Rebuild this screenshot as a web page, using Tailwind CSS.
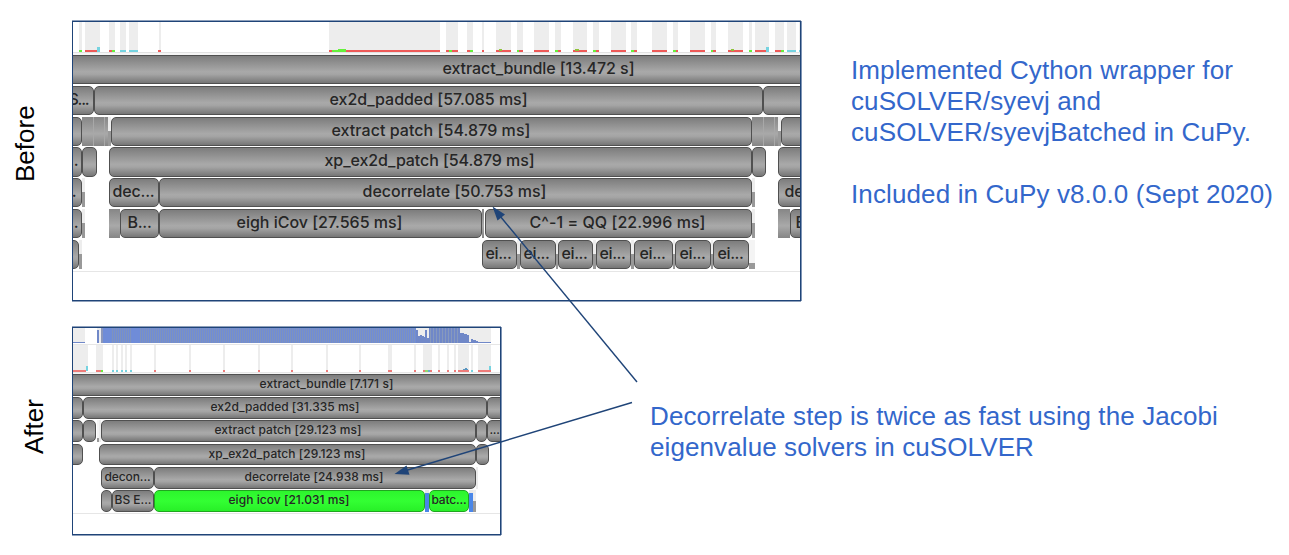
<!DOCTYPE html>
<html lang="en">
<head>
<meta charset="utf-8">
<title>CuPy eigenvalue solver timings</title>
<script src="https://cdn.jsdelivr.net/npm/@tailwindcss/browser@4"></script>
</head>
<body class="bg-white">
<main class="relative w-[1289px] h-[555px] overflow-hidden flex flex-col pt-[21px]">
  <section class="flex items-start h-[306px]">
    <h2 class="w-[72px] h-[280px] shrink-0 pt-[81px] pl-[10px]"><span class="block [writing-mode:vertical-rl] rotate-180 h-[80px] w-[30px] text-[26px] leading-[30px] text-black font-['Liberation_Sans',sans-serif]">Before</span></h2>
    <div class="w-[729px] h-[280px] shrink-0 border border-[#1f4478] shadow-[1px_0_0_#7f95b5,0_-1px_0_#8ea0bb,0_1px_0_#8ea0bb] overflow-hidden bg-white">
      <svg id="strip-a" class="block w-[727px] h-[33px]" viewBox="73 22 727 33" shape-rendering="crispEdges"></svg>
      <div id="rows-a" class="flex flex-col gap-[1.6px] border-b border-[#e6e6e6] h-[217px]"></div>
    </div>
    <div class="pl-[50px] pt-[34px] text-[26px] leading-[31px] text-[#3367cb] font-['Liberation_Sans',sans-serif] whitespace-nowrap">
      <p><span data-fit="381">Implemented Cython wrapper for</span><br><span data-fit="249">cuSOLVER/syevj and</span><br><span data-fit="399">cuSOLVER/syevjBatched in CuPy.</span></p>
      <p class="mt-[31px]"><span data-fit="421">Included in CuPy v8.0.0 (Sept 2020)</span></p>
    </div>
  </section>
  <section class="flex items-start h-[208px]">
    <h2 class="w-[72px] h-[208px] shrink-0 pt-[67px] pl-[19px]"><span class="block [writing-mode:vertical-rl] rotate-180 h-[60px] w-[30px] text-[26px] leading-[30px] text-black font-['Liberation_Sans',sans-serif]">After</span></h2>
    <div class="w-[429px] h-[208px] shrink-0 border border-[#1f4478] shadow-[1px_0_0_#7f95b5,0_-1px_0_#8ea0bb,0_1px_0_#8ea0bb] overflow-hidden bg-white">
      <svg id="strip-b" class="block w-[427px] h-[46px]" viewBox="73 328 427 46" shape-rendering="crispEdges"></svg>
      <div id="rows-b" class="flex flex-col gap-[1.3px] border-b border-[#e6e6e6] h-[140px]"></div>
    </div>
    <div class="pl-[149px] pt-[74px] text-[26px] leading-[31px] text-[#3367cb] font-['Liberation_Sans',sans-serif] whitespace-nowrap">
      <p><span data-fit="567">Decorrelate step is twice as fast using the Jacobi</span><br><span data-fit="383">eigenvalue solvers in cuSOLVER</span></p>
    </div>
  </section>
  <svg class="absolute inset-0 w-[1289px] h-[555px]" viewBox="0 0 1289 555" fill="#1f4478" stroke="#1f4478" stroke-width="1.4">
    <path d="M637 382L500 216"/><path stroke="none" d="M492.500 206.500L505 214.500L497.500 220.500Z"/>
    <path d="M632 402.500L406 470.500"/><path stroke="none" d="M394.500 474L406.500 465.500L409.500 474.800Z"/>
  </svg>
</main>
<script>
const skin = {
  bar: 'border border-[#505050] bg-[linear-gradient(#7d7d7d,#a9a9a9_58%,#a4a4a4_68%,#767676)]',
  green: 'border border-[#20a520] bg-[linear-gradient(#2df52d,#33ff33_50%,#28f028)]',
  fill: 'bg-[linear-gradient(#868686,#a9a9a9_58%,#858585)]',
  half: 'bg-[linear-gradient(#ededed_48%,#999999_48%)]',
  low: 'bg-[linear-gradient(#f4f4f4_80%,#999999_80%)]',
  line: 'bg-[#a8a8a8]',
  blue: 'bg-[linear-gradient(#e8e8e8_12%,#4a86e8_12%)]',
  pale: 'bg-[#ececec]'
};
// Each item: start, end, kind, label, label start, label width
const before = [
  [[65,808,'bar','extract_bundle [13.472 s]',443,191]],
  [[60,94,'bar','S...',69,19],[94,763,'bar','ex2d_padded [57.085 ms]',330,197],[763,810,'bar']],
  [[60,82,'bar'],[82,93,'fill'],[93,94,'line'],[94,104,'fill'],[104,105,'line'],[105,108,'fill'],[108,111,'half'],[111,752,'bar','extract patch [54.879 ms]',332,198],[752,763,'fill'],[763,764,'line'],[764,774,'fill'],[774,775,'line'],[775,778,'fill'],[778,781,'half'],[781,810,'bar']],
  [[60,82,'bar','...',65,13],[82,97,'bar'],[109,752,'bar','xp_ex2d_patch [54.879 ms]',325,209],[752,766,'bar'],[778,815,'bar']],
  [[60,82,'bar','...',63,13],[82,85,'half'],[109,159,'bar','dec...',113,41],[159,752,'bar','decorrelate [50.753 ms]',363,183],[752,755,'half'],[778,829,'bar','dec...',785,41]],
  [[60,82,'bar','...',65,13],[82,85,'half'],[109,120,'fill'],[120,159,'bar','B...',128,23],[159,482,'bar','eigh iCov [27.565 ms]',237,165],[482,484,'fill'],[485,752,'bar','C^-1 = QQ [22.996 ms]',530,175],[752,755,'half'],[778,790,'fill'],[790,830,'bar','B...',796,23]],
  [[60,79,'bar'],[79,82,'half'],[482,517,'bar','ei...',486,25],[517,520,'half'],[520,556,'bar','ei...',524,25],[556,558,'half'],[558,593,'bar','ei...',562,25],[593,596,'half'],[596,631,'bar','ei...',600,25],[631,634,'half'],[634,673,'bar','ei...',640,25],[673,675,'half'],[675,711,'bar','ei...',680,25],[711,713,'half'],[713,749,'bar','ei...',718,25],[749,755,'low']]
];
const after = [
  [[65,508,'bar','extract_bundle [7.171 s]',260,133]],
  [[60,83,'bar'],[83,487,'bar','ex2d_padded [31.335 ms]',211,148],[487,520,'bar']],
  [[60,83,'bar'],[83,96,'bar'],[97,99,'low'],[99,101,'pale'],[101,476,'bar','extract patch [29.123 ms]',215,146],[476,487,'bar'],[487,510,'bar','...',490,9]],
  [[60,83,'bar'],[99,476,'bar','xp_ex2d_patch [29.123 ms]',209,156],[476,489,'bar']],
  [[101,154,'bar','decon...',105,45],[154,476,'bar','decorrelate [24.938 ms]',245,138],[476,478,'pale']],
  [[101,112,'bar'],[112,154,'bar','BS E...',115,36],[154,425,'green','eigh icov [21.031 ms]',229,120],[425,427,'blue'],[427,429,'blue'],[429,469,'green','batc...',432,34],[469,473,'blue'],[473,476,'half']]
];
const pen = document.createElement('canvas').getContext('2d');
function fit(el, target, font) {
  pen.font = font;
  el.style.letterSpacing = ((target - pen.measureText(el.textContent).width) / el.textContent.length).toFixed(3) + 'px';
}
function build(id, rows, rowClass, textClass, font) {
  const host = document.getElementById(id);
  for (const items of rows) {
    const row = document.createElement('div');
    row.className = rowClass;
    let x = 73;
    for (const [a, b, kind, label, at, wide] of items) {
      const d = document.createElement('div');
      const round = kind === 'bar' || kind === 'green';
      d.className = 'shrink-0 h-full flex items-center overflow-hidden ' + (round ? 'rounded-[5px] ' : '') + skin[kind];
      d.style.marginLeft = (a - x) + 'px';
      d.style.width = (b - a) + 'px';
      x = b;
      row.append(d);
      if (label) {
        const s = document.createElement('span');
        s.className = textClass;
        s.textContent = label;
        s.style.marginLeft = (at - a - 1.5) + 'px';
        d.append(s);
        fit(s, wide + 1, font);
      }
    }
    host.append(row);
  }
}
build('rows-a', before, 'flex shrink-0 h-[29.2px]', "shrink-0 whitespace-nowrap font-['Inter',sans-serif] font-medium text-[16px] leading-[20px] text-[#262626] -mt-[3px]", "500 16px Inter");
build('rows-b', after, 'flex shrink-0 h-[21.9px]', "shrink-0 whitespace-nowrap font-['Inter',sans-serif] font-medium text-[12px] leading-[16px] text-[#262626] -mt-[2px]", "500 12px Inter");
document.querySelectorAll('[data-fit]').forEach(el => fit(el, +el.dataset.fit + 1, '26px "Liberation Sans"'));

const R = '#ee5a58', G = '#66f03c', C = '#76d3e0', O = '#8fc23a', P = '#ededed';
const rect = (x1, x2, y1, y2, c) => `<rect x="${x1}" y="${y1}" width="${x2 - x1}" height="${y2 - y1}" fill="${c}"/>`;
let a = '';
[[79,82],[85,100],[109,115],[120,126],[129,138],[159,161],[329,440],[446,458],[467,473],[482,484],[496,511],[517,523],[534,549],[555,561],[573,587],[593,599],[611,626],[631,637],[652,667],[673,678],[690,705],[711,716],[728,743],[749,752],[755,769],[775,784],[787,796],[799,800]].forEach(([l, r]) => a += rect(l, r, 22, 50, P));
[[79,82,G],[85,97,R],[109,112,R],[112,115,G],[120,126,C],[129,138,C],[158,161,R],[329,332,R],[332,346,G],[346,440,R],[446,449,R],[449,452,G],[452,458,R],[467,470,R],[470,473,G],[482,484,R],[496,511,R],[517,519,G],[519,523,R],[534,549,R],[555,558,G],[558,561,R],[573,587,R],[593,596,G],[596,599,R],[611,626,R],[631,634,G],[634,637,R],[652,667,R],[673,676,G],[676,678,R],[690,705,R],[711,713,G],[713,716,R],[728,743,R],[749,752,G],[755,766,R],[775,781,R],[781,784,G],[787,796,C],[799,800,C]].forEach(([l, r, c]) => a += rect(l, r, 50, 52, c));
a += rect(97,100,47,52,C) + rect(766,769,47,52,C) + rect(338,346,49,51,G);
[[499,502],[575,579],[731,734]].forEach(([l, r]) => a += rect(l, r, 49, 51, O));
a += rect(73,800,52,53,'#e2e2e2') + rect(73,800,53,55,'#f5f5f5');
document.getElementById('strip-a').innerHTML = a;

const B = '#7088c8';
let b = rect(73,85,328,342,P) + rect(73,85,342,343,B) + rect(97,103,328,343,P) + rect(97,99,330,343,B) + rect(101,103,328,343,'#8b97bb');
b += rect(103,416,328,343,'#6f8cd8');
for (let x = 112; x < 416; x += 2) if (x < 132 || x > 139) b += rect(x, x + 1, 328, 343, '#7f93bd');
b += rect(416,491,328,343,P);
[[416,418,330],[418,420,336],[420,422,335],[422,424,336],[424,425,337],[425,427,330],[427,429,338],[429,460,328],[460,464,333],[464,467,334],[467,469,335],[469,471,342],[471,473,339],[473,476,340],[476,478,341],[478,491,342]].forEach(([l, r, y]) => b += rect(l, r, y, 343, B));
for (let x = 430; x < 460; x += 3) b += rect(x, x + 1, 328, 343, '#8799bd');
b += rect(73,500,344,345,'#e6e6e6');
[[73,88],[96,103],[112,114],[116,118],[121,123],[125,127],[130,132],[154,156],[189,191],[223,225],[258,260],[291,293],[326,328],[359,361],[388,392],[414,416],[423,432],[438,440],[447,449],[454,456],[458,469],[471,473],[478,491]].forEach(([l, r]) => b += rect(l, r, 345, 370, P));
const S = '#ee7c7a';
[[73,86,S],[96,101,S],[101,103,G],[112,114,C],[116,118,C],[121,123,C],[125,127,C],[130,132,C],[154,156,S],[189,191,S],[223,225,S],[258,260,S],[291,293,S],[326,328,S],[359,361,S],[388,392,S],[414,416,S],[423,425,S],[425,428,'#90dc70'],[428,430,'#6aa8d0'],[430,432,S],[438,440,S],[447,449,S],[454,456,S],[458,469,S],[471,473,C],[478,491,S]].forEach(([l, r, c]) => b += rect(l, r, 370, 372, c));
b += rect(86,88,366,371,C) + rect(489,491,366,370,C) + rect(463,468,369,370,'#5a96c0') + rect(465,467,368,369,'#5a96c0');
b += rect(73,500,372,373,'#e6e6e6') + rect(73,500,373,374,'#f5f5f5');
document.getElementById('strip-b').innerHTML = b;
</script>
</body>
</html>
